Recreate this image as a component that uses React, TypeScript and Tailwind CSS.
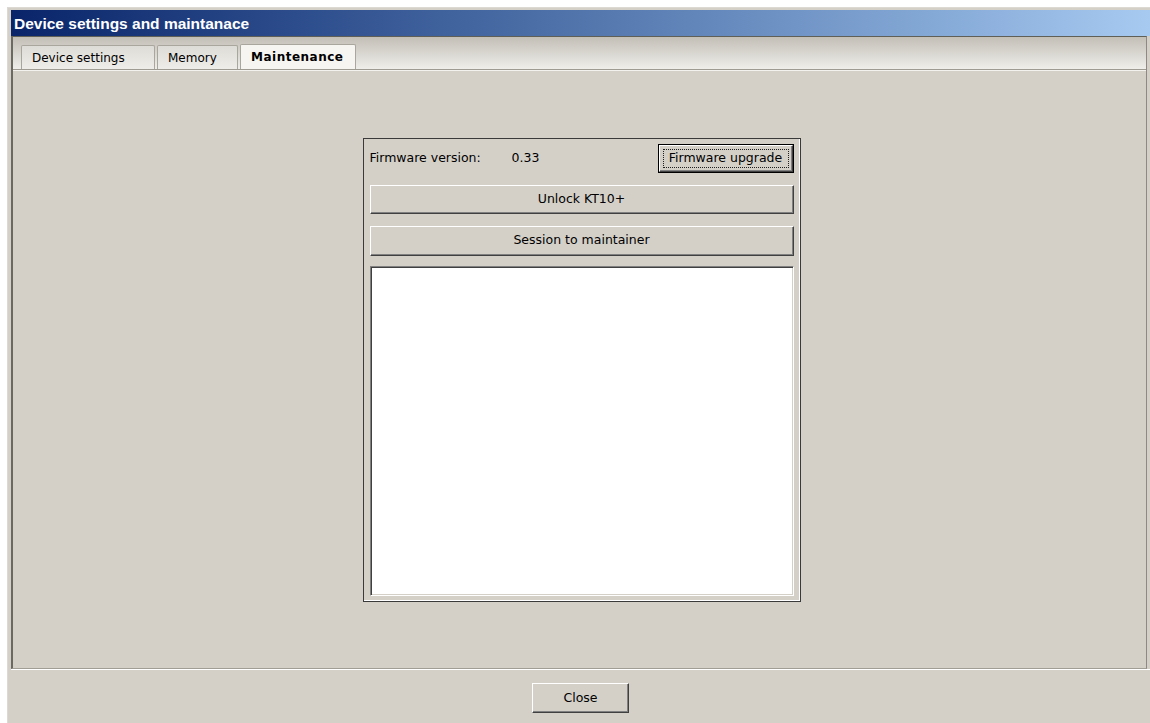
import React from "react";

// Classic raised 3D push button
function Button({
  children,
  className = "",
}: {
  children: React.ReactNode;
  className?: string;
}) {
  return (
    <div
      className={
        "flex items-center justify-center bg-[#d4d0c8] border border-t-white border-l-white border-b-[#404040] border-r-[#404040] shadow-[inset_-1px_-1px_0_#808080] text-[12.5px] text-black " +
        className
      }
    >
      {children}
    </div>
  );
}

function Tab({
  label,
  width,
  active = false,
}: {
  label: string;
  width: string;
  active?: boolean;
}) {
  return (
    <div
      className={
        "flex items-center pl-[10px] border-t border-l border-r border-[#a9a69e] rounded-t-[2px] text-[12px] " +
        width +
        (active
          ? " bg-[#f6f5f2] font-bold h-[25px] tracking-[0.5px]"
          : " h-[24px] bg-gradient-to-b from-[#dedcd6] to-[#eeede9]")
      }
    >
      {label}
    </div>
  );
}

export default function App() {
  return (
    <div className="w-[1150px] h-[723px] bg-white pl-[7px] pt-[7px] overflow-hidden font-['DejaVu_Sans',Verdana,sans-serif] text-black">
      <div className="h-full flex flex-col bg-[#d4d0c8] border-l border-t border-[#dcd9d2] pl-[3px] pt-[2px]">
        {/* Title bar */}
        <div className="h-[26px] shrink-0 flex items-center pl-[3px] pt-[1px] bg-gradient-to-r from-[#0a246a] to-[#a6caf0]">
          <span className="text-white font-bold text-[15.5px] font-['Liberation_Sans',Arial,sans-serif]">
            Device settings and maintanace
          </span>
        </div>

        {/* Tabbed page */}
        <div className="flex-1 min-h-0 flex flex-col mr-[3px] border-t border-t-[#5f5e57] border-l-2 border-l-[#6a6962] border-r border-r-[#8c8a82] border-b border-b-[#a19e96]">
          <div className="h-[33px] shrink-0 flex items-end gap-[2px] pl-[8px] bg-gradient-to-b from-[#c3bfb7] to-[#efeeea] border-b border-[#9e9b93]">
            <Tab label="Device settings" width="w-[134px]" />
            <Tab label="Memory" width="w-[81px]" />
            <Tab label="Maintenance" width="w-[116px]" active />
          </div>

          <div className="flex-1 min-h-0 flex items-center justify-center border-t border-[#f3f2ee] pl-[4px]">
            {/* Maintenance group */}
            <div className="w-[438px] h-[464px] flex flex-col border border-[#3a3a3a] shadow-[inset_-1px_-1px_0_#ffffff] px-[6px] pt-[5px] pb-[5px]">
              <div className="h-[29px] flex items-center pt-[1px]">
                <span className="text-[12.5px] w-[142px]">Firmware version:</span>
                <span className="text-[12.5px]">0.33</span>
                <div className="ml-auto w-[136px] h-[29px] border border-black">
                  <Button className="w-full h-full relative">
                    <span className="absolute inset-[3px] border border-dotted border-[#202020]" />
                    Firmware upgrade
                  </Button>
                </div>
              </div>
              <Button className="mt-[12px] h-[29px]">Unlock KT10+</Button>
              <Button className="mt-[12px] h-[30px]">Session to maintainer</Button>
              <div className="mt-[10px] flex-1 bg-white border border-t-[#808080] border-l-[#808080] border-b-white border-r-white shadow-[inset_1px_1px_0_#404040,inset_-1px_-1px_0_#d4d0c8]" />
            </div>
          </div>
        </div>

        {/* Dialog buttons */}
        <div className="h-[54px] shrink-0 flex justify-center border-t border-white pt-[13px]">
          <Button className="w-[97px] h-[30px]">Close</Button>
        </div>
      </div>
    </div>
  );
}
